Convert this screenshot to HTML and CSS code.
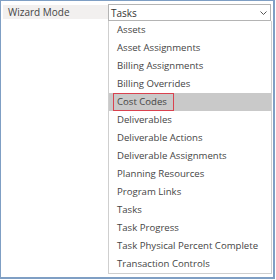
FILE: index.html
```html
<!DOCTYPE html>
<html lang="en">
<head>
    <meta charset="UTF-8">
    <title>Wizard Mode</title>
    <link rel="stylesheet" href="styles.css">
</head>
<body>
    <div class="frame">
        <div class="field">
            <div class="label">Wizard Mode</div>
            <div class="select">
                <span>Tasks</span>
                <svg class="arrow" width="7" height="4" viewBox="0 0 7 4"><path d="M0.5 0.5 L3.5 3.5 L6.5 0.5" fill="none" stroke="#555" stroke-width="1"/></svg>
            </div>
        </div>
        <ul class="options">
            <li>Assets</li>
            <li>Asset Assignments</li>
            <li>Billing Assignments</li>
            <li>Billing Overrides</li>
            <li class="selected"><span class="mark">Cost Codes</span></li>
            <li>Deliverables</li>
            <li>Deliverable Actions</li>
            <li>Deliverable Assignments</li>
            <li>Planning Resources</li>
            <li>Program Links</li>
            <li>Tasks</li>
            <li>Task Progress</li>
            <li>Task Physical Percent Complete</li>
            <li>Transaction Controls</li>
        </ul>
    </div>
</body>
</html>
```

FILE: styles.css
```css
body {
    margin: 0;
    font-family: "Open Sans", "Noto Sans", sans-serif;
    font-size: 9.6px;
    color: #454545;
    background: #fff;
}
.frame {
    width: 272px;
    height: 276px;
    border: 1px solid #7f9fc4;
    border-right-width: 2px;
    border-bottom-width: 2px;
    overflow: hidden;
}
.field {
    display: flex;
    margin: 3px 2px 0 2px;
}
.label {
    width: 100px;
    height: 14px;
    margin-top: 1px;
    padding-left: 5px;
    line-height: 14px;
    background: #f2f0ef;
    font-size: 10px;
}
.select {
    flex: 1;
    display: flex;
    align-items: center;
    justify-content: space-between;
    height: 15px;
    padding: 0 3px 0 2px;
    border: 1px solid #b4b4b4;
    color: #333;
    font-size: 10px;
}
.arrow {
    margin-top: 1px;
}
.options {
    list-style: none;
    margin: 0 0 0 107px;
    padding: 0;
    border: 1px solid #cfcfcf;
    border-top: none;
    width: 162px;
}
.options li {
    height: 18px;
    line-height: 18px;
    padding-left: 8px;
    white-space: nowrap;
}
.options li.selected {
    background: #c9c9c9;
}
.mark {
    display: inline-block;
    height: 16px;
    line-height: 16px;
    margin-left: -4px;
    padding: 0 6px 0 3px;
    border: 1px solid #d9424f;
    vertical-align: top;
}
```
